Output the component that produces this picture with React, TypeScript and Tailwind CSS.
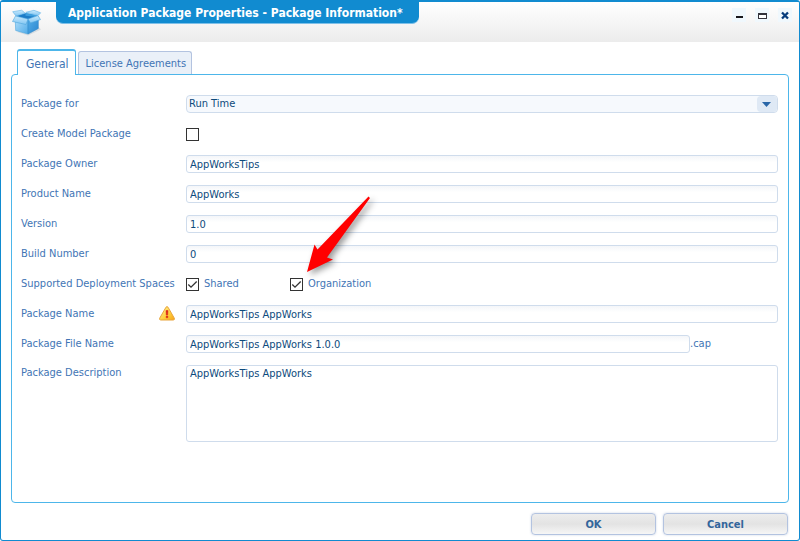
import { useId, type ReactNode } from "react";

const fieldClass =
  "h-[18px] w-full min-w-0 rounded-[3px] border border-[#cfdcec] bg-linear-to-b from-[#f4f6f9] to-white to-40% px-[3px] text-[11px] leading-4 text-[#0d4a7c] outline-none";

function Label({ htmlFor, children }: { htmlFor?: string; children: ReactNode }) {
  return (
    <label htmlFor={htmlFor} className="flex-1 whitespace-nowrap">
      {children}
    </label>
  );
}

function Row({ label, id, icon, children }: { label: string; id: string; icon?: ReactNode; children: ReactNode }) {
  return (
    <div className="flex h-[30px] items-center">
      <div className="flex w-[165px] shrink-0 items-center pr-[11px]">
        <Label htmlFor={id}>{label}</Label>
        {icon}
      </div>
      {children}
    </div>
  );
}

function TextRow({ label, value, icon }: { label: string; value: string; icon?: ReactNode }) {
  const id = useId();
  return (
    <Row label={label} id={id} icon={icon}>
      <input id={id} type="text" defaultValue={value} className={fieldClass} />
    </Row>
  );
}

function CheckBox({ id, checked = false }: { id: string; checked?: boolean }) {
  return (
    <span className="relative block size-[13px] shrink-0">
      <input
        id={id}
        type="checkbox"
        defaultChecked={checked}
        className="peer block size-[13px] appearance-none border border-[#333] bg-white"
      />
      <svg
        viewBox="0 0 13 13"
        className="pointer-events-none absolute inset-0 hidden size-[13px] peer-checked:block"
        fill="none"
        stroke="#333"
        strokeWidth="1.3"
      >
        <path d="M2.3 6.5 5 9.2l5.7-5.7" />
      </svg>
    </span>
  );
}

function BoxIcon() {
  return (
    <svg width="30" height="24" viewBox="0 0 30 24" overflow="visible" aria-hidden="true">
      <defs>
        <linearGradient id="boxFront" x1="0" y1="0" x2="1" y2="1">
          <stop offset="0" stopColor="#b4e0fb" />
          <stop offset="1" stopColor="#4fabe8" />
        </linearGradient>
        <linearGradient id="boxSide" x1="0" y1="0" x2="1" y2="1">
          <stop offset="0" stopColor="#55b0ea" />
          <stop offset="1" stopColor="#2b86cf" />
        </linearGradient>
        <linearGradient id="boxFlap" x1="0" y1="0" x2="0" y2="1">
          <stop offset="0" stopColor="#c9eafd" />
          <stop offset="1" stopColor="#82c6f2" />
        </linearGradient>
      </defs>
      <path d="m5 22 11 3.500 13-6-3-3z" fill="#b7c3cc" opacity=".45" />
      <path d="m3.500 6 10-3 12.500 2.500-10 4z" fill="#1d7cc7" />
      <path d="m13.500 3 12.500 2.500-3 1.300-9.500-1z" fill="#3d9fdf" />
      <path d="M3.200 8 16 10v14L3.700 20.500z" fill="url(#boxFront)" stroke="#4fa6de" strokeWidth=".6" />
      <path d="m16 9.500 10.300-3v12L16 24z" fill="url(#boxSide)" stroke="#3089cb" strokeWidth=".6" />
      <path d="M.7 1.700 9.700.2 13.300 3.300 4 6z" fill="url(#boxFlap)" stroke="#5fb2e6" strokeWidth=".6" />
      <path d="m13.700 2.300 8.300-2L28.700 2.800 26 5.600z" fill="url(#boxFlap)" stroke="#5fb2e6" strokeWidth=".6" />
      <path d="m3.500 6 12.500 3-2 5.500L.5 11.500z" fill="url(#boxFlap)" stroke="#4fa6de" strokeWidth=".6" />
      <path d="m16 9 10-3.400 2.500 4L18.500 13z" fill="url(#boxFlap)" stroke="#4fa6de" strokeWidth=".6" />
    </svg>
  );
}

function WarningIcon() {
  return (
    <svg width="16" height="15" viewBox="0 0 16 15" role="img" aria-label="Warning" className="mb-0.5 shrink-0">
      <defs>
        <linearGradient id="warn" x1="0" y1="0" x2="1" y2="1">
          <stop offset="0" stopColor="#fff3a0" />
          <stop offset=".6" stopColor="#ffce3a" />
          <stop offset="1" stopColor="#f5a21b" />
        </linearGradient>
      </defs>
      <path
        d="M7 1.200Q8 0 9 1.200l6.300 11q.6 1.700-1 1.800H1.700Q.1 13.900.7 12.200z"
        fill="url(#warn)"
        stroke="#e8a33c"
        strokeWidth="1"
      />
      <path d="M7 4.500h2L8.700 9H7.300zM7.200 10h1.600v1.800H7.200z" fill="#dc2418" stroke="#dc2418" strokeWidth=".5" />
    </svg>
  );
}

function PointerArrow() {
  return (
    <svg
      width="76"
      height="88"
      viewBox="0 0 76 88"
      aria-hidden="true"
      className="pointer-events-none absolute -top-[86px] left-4 z-10 drop-shadow-[3px_3px_3px_rgba(0,0,0,0.4)]"
    >
      <path d="M62.500 6.500 64 8 21 67.500 27 69.500 1 82 8.500 54.500 11.500 59.500z" fill="#ff0000" />
    </svg>
  );
}

export default function App() {
  return (
    <main className="flex min-h-screen flex-col overflow-hidden rounded-[3px] border border-t-2 border-[#118bd0] bg-white font-['DejaVu_Sans_Condensed','DejaVu_Sans',sans-serif] text-[11px] leading-4 text-[#4275b5]">
      <header className="flex h-10 shrink-0 items-start justify-between bg-linear-to-b from-white to-[#ececec]">
        <div className="flex items-start">
          <div className="flex h-10 w-[55px] items-center pl-[11px]">
            <BoxIcon />
          </div>
          <h1 className="h-[22px] rounded-b-[7px] border-b border-[#7ec0e8] bg-[#118bd0] pr-4 pl-3 text-[12px] leading-[22px] font-bold whitespace-nowrap text-white">
            Application Package Properties - Package Information*
          </h1>
        </div>
        <div className="flex gap-[9px] pt-1.5 pr-[7px]">
          <button type="button" aria-label="Minimize" className="size-[14px] bg-[#f0f8fd]">
            <svg viewBox="0 0 14 14" className="size-[14px]">
              <path d="M4 8h7v2H4z" fill="#17171c" />
            </svg>
          </button>
          <button type="button" aria-label="Maximize" className="size-[14px] bg-[#f0f8fd]">
            <svg viewBox="0 0 14 14" className="size-[14px]">
              <path d="M3 5h9v6H3z" fill="#33333b" />
              <path d="M4 7h7v3H4z" fill="#fff" />
            </svg>
          </button>
          <button type="button" aria-label="Close" className="size-[14px] bg-[#f0f8fd]">
            <svg viewBox="0 0 14 14" className="size-[14px]">
              <path d="m4 4.500 6 6M10 4.500l-6 6" stroke="#063c7c" strokeWidth="2.300" />
            </svg>
          </button>
        </div>
      </header>

      <div className="flex flex-1 flex-col px-2.5 pt-[7px]">
        <div role="tablist" className="flex items-end gap-0.5 pl-1.5">
          <button
            type="button"
            role="tab"
            aria-selected="true"
            className="z-10 -mb-px h-[26px] rounded-t-[3px] border border-t-2 border-b-0 border-[#4db6ea] bg-white pt-0.5 pr-1.5 pl-2 text-[12px] whitespace-nowrap"
          >
            General
          </button>
          <button
            type="button"
            role="tab"
            aria-selected="false"
            className="h-[23px] rounded-t-[3px] border border-b-0 border-[#b3c3e0] bg-[#eaf0f8] pt-0.5 pr-[5px] pl-[7px] whitespace-nowrap"
          >
            License Agreements
          </button>
        </div>

        <form role="tabpanel" className="flex-1 rounded-[4px] border border-[#4db6ea] px-[9px] pt-3.5 pr-2.5">
          <Row label="Package for" id="package-for">
            <div className="relative flex h-[18px] w-full">
              <select
                id="package-for"
                className="h-[18px] w-full appearance-none rounded-[4px] border border-[#cfdcec] bg-[#f6f9fd] px-0.5 text-[11px] leading-4 text-[#0d4a7c] outline-none"
              >
                <option>Run Time</option>
              </select>
              <span className="pointer-events-none absolute inset-y-px right-px flex w-5 items-center justify-center rounded-[4px] bg-[#dfe9f5]">
                <svg width="10" height="5" viewBox="0 0 10 5">
                  <path d="M0 0h9L4.500 5z" fill="#2866a8" />
                </svg>
              </span>
            </div>
          </Row>
          <Row label="Create Model Package" id="create-model">
            <CheckBox id="create-model" />
          </Row>
          <TextRow label="Package Owner" value="AppWorksTips" />
          <TextRow label="Product Name" value="AppWorks" />
          <TextRow label="Version" value="1.0" />
          <TextRow label="Build Number" value="0" />
          <Row label="Supported Deployment Spaces" id="shared">
            <div className="flex w-[104px] items-center gap-[5px]">
              <CheckBox id="shared" checked />
              <Label htmlFor="shared">Shared</Label>
            </div>
            <div className="relative flex items-center gap-[5px]">
              <CheckBox id="organization" checked />
              <Label htmlFor="organization">Organization</Label>
              <PointerArrow />
            </div>
          </Row>
          <TextRow label="Package Name" value="AppWorksTips AppWorks" icon={<WarningIcon />} />
          <Row label="Package File Name" id="file-name">
            <input id="file-name" type="text" defaultValue="AppWorksTips AppWorks 1.0.0" className={fieldClass} />
            <span className="w-[88px] shrink-0">.cap</span>
          </Row>
          <div className="flex items-start pt-[6px]">
            <label htmlFor="description" className="w-[165px] shrink-0">
              Package Description
            </label>
            <textarea
              id="description"
              defaultValue="AppWorksTips AppWorks"
              className="block h-[77px] w-full min-w-0 resize-none rounded-[3px] border border-[#cfdcec] bg-white px-[3px] text-[11px] leading-4 text-[#0d4a7c] outline-none"
            />
          </div>
        </form>

        <footer className="flex justify-end gap-[7px] pt-2.5 pr-px pb-[5px]">
          {["OK", "Cancel"].map((text) => (
            <button
              key={text}
              type="button"
              className="h-[22px] w-[125px] rounded-[4px] border border-[#b3c3e0] bg-linear-to-b from-[#ededed] via-[#e3e3e3] to-[#f6f6f6] pt-0.5 text-[11px] leading-[18px] font-bold text-[#33659b] shadow-[0_0_2px_rgba(140,160,200,0.5)]"
            >
              {text}
            </button>
          ))}
        </footer>
      </div>
    </main>
  );
}
